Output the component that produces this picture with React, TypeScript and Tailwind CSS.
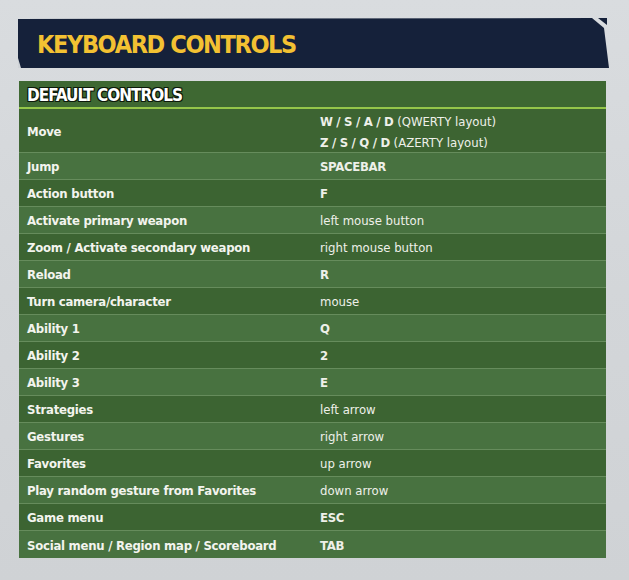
import React from "react";

type Row = { action: string; value: React.ReactNode };

const F = "[font-family:'DejaVu_Sans_Condensed','Roboto',sans-serif]";

const K = ({ children }: { children: React.ReactNode }) => (
  <b className="font-bold tracking-[-0.3px]">{children}</b>
);

const rows: Row[] = [
  { action: "Jump", value: <K>SPACEBAR</K> },
  { action: "Action button", value: <K>F</K> },
  { action: "Activate primary weapon", value: "left mouse button" },
  { action: "Zoom / Activate secondary weapon", value: "right mouse button" },
  { action: "Reload", value: <K>R</K> },
  { action: "Turn camera/character", value: "mouse" },
  { action: "Ability 1", value: <K>Q</K> },
  { action: "Ability 2", value: <K>2</K> },
  { action: "Ability 3", value: <K>E</K> },
  { action: "Strategies", value: "left arrow" },
  { action: "Gestures", value: "right arrow" },
  { action: "Favorites", value: "up arrow" },
  { action: "Play random gesture from Favorites", value: "down arrow" },
  { action: "Game menu", value: <K>ESC</K> },
  { action: "Social menu / Region map / Scoreboard", value: <K>TAB</K> },
];

export default function App() {
  return (
    <div className={`w-[629px] h-[580px] bg-gradient-to-b from-[#d9dcdf] via-[#d3d6d9] to-[#cfd2d5] pt-[18px] ${F}`}>
      <div className="relative ml-[18px] w-[591px] h-[51px] flex items-center pl-[19px]">
        <svg className="absolute inset-0" width="591" height="51" viewBox="0 0 591 51">
          <polygon points="0,1 574,0 586,10 591,50 0,50" fill="#15213a" />
          <polygon points="580,0 589,-1 589,7" fill="#15213a" />
          <polygon points="0,40 3,50 0,50" fill="#cfd3d7" />
        </svg>
        <span className="relative text-[25px] leading-none font-bold text-[#f3c132] tracking-[-1.4px] pt-[2px]">
          KEYBOARD CONTROLS
        </span>
      </div>
      <div className="ml-[19px] mt-[12px] w-[587px] text-[13px] text-[#f3f4ee]">
        <div className="h-[28px] bg-[#3e6832] border-b-2 border-[#95c64a] flex items-center pl-[8px] pt-[2px]">
          <span className="text-[17px] font-bold leading-none tracking-[-1px] text-white [text-shadow:0_0_1px_#0d1a0a,1px_1px_0_#0d1a0a,-1px_-1px_0_#0d1a0a,1px_-1px_0_#0d1a0a,-1px_1px_0_#0d1a0a]">
            DEFAULT CONTROLS
          </span>
        </div>
        <div className="h-[44px] bg-[#3d6432] border-b border-[#668c5c] flex items-center pt-[2px]">
          <div className="w-[301px] pl-[8px] font-bold tracking-[-0.25px]">Move</div>
          <div className="flex flex-col leading-[21px] text-[#eef0e9]">
            <span>
              <K>W / S / A / D</K> (QWERTY layout)
            </span>
            <span>
              <K>Z / S / Q / D</K> (AZERTY layout)
            </span>
          </div>
        </div>
        {rows.map((r, i) => (
          <div
            key={r.action}
            className={`h-[27px] flex items-center pt-[2px] ${i < rows.length - 1 ? "border-b border-[#668c5c]" : ""} ${
              i % 2 === 0 ? "bg-[#487240]" : "bg-[#3c6432]"
            }`}
          >
            <div className="w-[301px] pl-[8px] font-bold tracking-[-0.25px]">{r.action}</div>
            <div className="text-[#eef0e9]">{r.value}</div>
          </div>
        ))}
      </div>
    </div>
  );
}
